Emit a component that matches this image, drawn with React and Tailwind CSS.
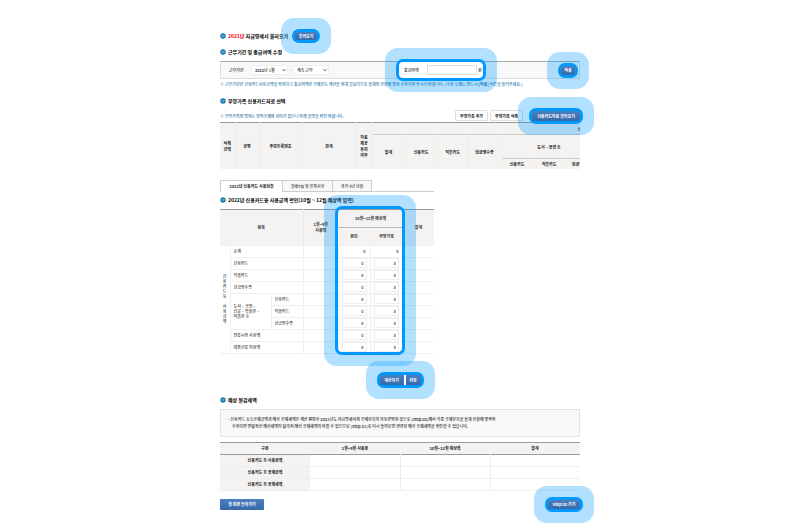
import React, { useState } from "react";
import clsx from "clsx";

const Bullet = () => (
  <svg viewBox="0 0 12 12" className="w-[6px] h-[6px] shrink-0">
    <circle cx="6" cy="6" r="5.5" fill="#1f7ab8" />
    <path
      d="M4 5l2 2.2L8 5"
      fill="none"
      stroke="#d5ebfa"
      strokeWidth="1.5"
      strokeLinecap="round"
    />
  </svg>
);

const Title = ({ children, className }) => (
  <h2
    className={clsx(
      "flex items-center gap-[2px] h-[8px] text-[5px] leading-[8px] font-bold text-black whitespace-nowrap",
      className
    )}
  >
    <Bullet />
    <span>{children}</span>
  </h2>
);

// Blue ring with a pale halo around the things the guide points at
const Highlight = ({ children, className }) => (
  <div
    className={clsx(
      "relative z-10 flex items-center rounded-[4px] shadow-[0_0_0_3px_#0099ff,0_0_0_14px_rgba(0,153,255,0.3)]",
      className
    )}
  >
    {children}
  </div>
);

const BlueButton = ({ children, className }) => (
  <button
    type="button"
    className={clsx(
      "bg-linear-to-b from-[#4a7fc0] to-[#3768a8] text-white font-bold text-[4px] leading-[6px] whitespace-nowrap text-center",
      className
    )}
  >
    {children}
  </button>
);

const WhiteButton = ({ children }) => (
  <button
    type="button"
    className="w-[33px] h-[11px] rounded-[1px] border border-[#dddddd] bg-white font-bold text-[4px] leading-[6px] text-[#222222] whitespace-nowrap"
  >
    {children}
  </button>
);

const Select = ({ label, options, className }) => (
  <div className={clsx("relative", className)}>
    <select
      aria-label={label}
      className="block w-full h-[10px] pl-[3px] appearance-none border border-[#eeeeee] bg-white text-[4px] leading-[8px] font-medium text-[#222222]"
    >
      {options.map((option) => (
        <option key={option}>{option}</option>
      ))}
    </select>
    <svg
      viewBox="0 0 10 10"
      className="absolute right-[2px] top-[3px] w-[4px] h-[4px] pointer-events-none"
    >
      <path d="M1 3l4 4 4-4" fill="none" stroke="#333333" strokeWidth="2" />
    </svg>
  </div>
);

const AmountInput = ({ label }) => {
  const [value, setValue] = useState("0");

  return (
    <input
      aria-label={label}
      value={value}
      onChange={(e) => setValue(e.target.value)}
      className="block mx-auto w-[25px] h-[10px] pr-[2px] border border-[#eeeeee] bg-white text-right text-[4px] leading-[8px] font-medium text-[#333333]"
    />
  );
};

const rows = [
  { label: "신용카드" },
  { label: "직불카드" },
  { label: "현금영수증" },
  { label: "신용카드", group: true, first: true },
  { label: "직불카드", group: true },
  { label: "현금영수증", group: true },
  { label: "전통시장 사용액" },
  { label: "대중교통 이용액" },
];

const tabs = [
  { label: "2022년 신용카드 사용현황", width: "w-[63px]" },
  { label: "절세Tip 및 유의사항", width: "w-[50px]" },
  { label: "과거 3년 현황", width: "w-[39px]" },
];

const FamilyTable = () => (
  <div className="mt-px overflow-hidden">
    <table className="w-[598px] table-fixed border-collapse border-t border-[#999999] bg-[#f4f3f2] text-center">
      <colgroup>
        <col className="w-[15px]" />
        <col className="w-[24px]" />
        <col className="w-[43px]" />
        <col className="w-[54px]" />
        <col className="w-[16px]" />
        <col className="w-[33px]" />
        <col className="w-[32px]" />
        <col className="w-[31px]" />
        <col className="w-[33px]" />
        <col className="w-[32px]" />
        <col className="w-[32px]" />
        <col className="w-[32px]" />
        <col />
      </colgroup>
      <thead className="[&_th]:border-r [&_th]:border-r-[#efeeee] [&_th]:p-0 [&_th]:font-bold">
        <tr className="h-[12px]">
          <th rowSpan={3}>
            삭제
            <br />
            선택
          </th>
          <th rowSpan={3}>성명</th>
          <th rowSpan={3}>주민등록번호</th>
          <th rowSpan={3}>관계</th>
          <th rowSpan={3}>
            자료
            <br />
            제공
            <br />
            동의
            <br />
            여부
          </th>
          <th colSpan={8}>신용카드등 사용금액</th>
        </tr>
        <tr className="h-[24px] [&>th]:border-t [&>th]:border-t-[#cccccc]">
          <th rowSpan={2}>합계</th>
          <th rowSpan={2}>신용카드</th>
          <th rowSpan={2}>직불카드</th>
          <th rowSpan={2}>현금영수증</th>
          <th colSpan={3}>도서 · 공연 등</th>
          <th rowSpan={2}></th>
        </tr>
        <tr className="h-[10px] [&>th]:border-t [&>th]:border-t-[#cccccc]">
          <th>신용카드</th>
          <th>직불카드</th>
          <th>현금영수증</th>
        </tr>
      </thead>
    </table>
  </div>
);

const UsageTable = () => (
  <div className="relative mt-[5px] w-[214px]">
    <table className="w-full table-fixed border-collapse border-t border-[#999999] text-[#333333]">
      <colgroup>
        <col className="w-[10px]" />
        <col className="w-[41px]" />
        <col className="w-[32px]" />
        <col className="w-[35px]" />
        <col className="w-[32px]" />
        <col className="w-[33px]" />
        <col className="w-[31px]" />
      </colgroup>
      <thead className="bg-[#f4f3f2] border-b border-[#999999] text-center [&_th]:p-0 [&_th]:font-bold">
        <tr className="h-[18px]">
          <th colSpan={3} rowSpan={2}>
            항목
          </th>
          <th rowSpan={2} className="border-l border-l-[#ebeaea]">
            1월~9월
            <br />
            사용액
          </th>
          <th colSpan={2} className="border-b border-b-[#bbbbbb]">
            10월~12월 예상액
          </th>
          <th rowSpan={2}>합계</th>
        </tr>
        <tr className="h-[18px]">
          <th>본인</th>
          <th>부양가족</th>
        </tr>
      </thead>
      <tbody className="[&_td]:border [&_td]:border-[#f0f0f0] [&_td]:p-0 [&_th]:border [&_th]:border-[#f0f0f0] [&_th]:p-0 [&_th]:pl-[3px] [&_th]:font-medium [&_th]:text-left [&_td:last-child]:border-r-0">
        <tr className="h-[12px]">
          <td rowSpan={9} className="border-l-0!">
            <div className="mx-auto w-[4px] break-all leading-[5px]">
              <span className="block">신용카드등</span>
              <span className="block mt-[5px]">사용금액</span>
            </div>
          </td>
          <th colSpan={2}>소계</th>
          <td></td>
          <td className="pr-[4px]! text-right">0</td>
          <td className="pr-[4px]! text-right">0</td>
          <td></td>
        </tr>
        {rows.map((row, i) => (
          <tr key={i} className="h-[12px]">
            {row.first && (
              <th rowSpan={3} className="leading-[5px]">
                도서 · 공연 ·<br />
                신문 · 박물관 ·<br />
                미술관 등
              </th>
            )}
            <th colSpan={row.group ? 1 : 2}>{row.label}</th>
            <td></td>
            <td>
              <AmountInput label={`${row.label} 본인`} />
            </td>
            <td>
              <AmountInput label={`${row.label} 부양가족`} />
            </td>
            <td></td>
          </tr>
        ))}
      </tbody>
    </table>
    <Highlight className="absolute! left-[118px] top-0 bottom-[2px] w-[64px] pointer-events-none" />
  </div>
);

const ResultTable = () => (
  <table className="mt-[5px] w-full table-fixed border-collapse border-t border-b border-t-[#999999] border-b-[#dddddd] text-[#222222]">
    <thead className="bg-[#f4f3f2]">
      <tr className="h-[12px] border-b border-[#999999] [&>th]:p-0 [&>th]:font-bold">
        <th>구분</th>
        <th>1월~9월 사용분</th>
        <th>10월~12월 예상액</th>
        <th>합계</th>
      </tr>
    </thead>
    <tbody>
      {["신용카드 등 사용금액", "신용카드 등 공제금액", "신용카드 등 공제세액"].map(
        (label) => (
          <tr key={label} className="h-[12px] border-b border-[#eeeeee]">
            <th className="bg-[#f4f3f2] p-0 font-bold">{label}</th>
            <td className="border-r border-r-[#eeeeee]"></td>
            <td className="border-r border-r-[#eeeeee]"></td>
            <td></td>
          </tr>
        )
      )}
    </tbody>
  </table>
);

const App = () => {
  const [active, setActive] = useState(0);

  return (
    <div className="min-h-screen bg-white overflow-hidden">
      <main className="mx-auto w-[45%] min-w-[360px] pt-[32px] pb-[14px] font-['Noto_Sans_CJK_KR',sans-serif] text-[4px] leading-[6px] font-medium text-[#222222]">
        {/* Load statement */}
        <div className="flex items-center gap-[7px]">
          <Title>
            <span className="text-[#e60012]">2021년</span> 지급명세서 불러오기
          </Title>
          <Highlight>
            <BlueButton className="w-[22px] h-[8px] rounded-[2px]">
              불러오기
            </BlueButton>
          </Highlight>
        </div>

        {/* Working period and salary */}
        <Title className="mt-[8px]">근무기간 및 총급여액 수정</Title>
        <div className="flex items-center h-[18px] mt-[5px] pl-[8px] pr-[4px] border border-[#dddddd] border-t-[#aaaaaa] bg-[#f8f8f8] whitespace-nowrap">
          <span className="w-[22px]">근무기간</span>
          <Select
            label="근무 시작월"
            options={["2022년 1월", "2022년 2월"]}
            className="w-[37px]"
          />
          <span className="w-[5px] text-center">~</span>
          <Select
            label="근무 종료월"
            options={["계속 근무", "12월"]}
            className="w-[36px]"
          />
          <Highlight className="ml-[70px] h-[16px] w-[84px] pl-[5px] bg-white">
            <label htmlFor="salary" className="w-[23px]">
              총급여액
            </label>
            <input
              id="salary"
              className="w-[50px] h-[10px] px-[2px] border border-[#dddddd] bg-white"
            />
            <span className="pl-[1px]">원</span>
          </Highlight>
          <Highlight className="ml-auto">
            <BlueButton className="w-[14px] h-[9px] rounded-[2px]">
              적용
            </BlueButton>
          </Highlight>
        </div>
        <p className="mt-[2px] text-[#1f72a8] whitespace-nowrap">
          ※ 근무기간란 신용카드사용금액을 확정하고 총급여액란 공제한도 계산을 위해
          필요하므로 올해의 상황에 맞게 수정하여 주시기 바랍니다. (수정 후에는
          반드시 <b>[적용]</b> 버튼을 눌러주세요.)
        </p>

        {/* Family members */}
        <Title className="mt-[10px]">부양가족 신용카드자료 선택</Title>
        <div className="flex items-center h-[11px] mt-[5px] whitespace-nowrap">
          <p className="mr-auto text-[#1f72a8]">
            ※ 부양가족의 범위는 인적공제와 차이가 있으니 아래 설명을 확인
            바랍니다.
          </p>
          <div className="flex gap-[2px]">
            <WhiteButton>부양가족 추가</WhiteButton>
            <WhiteButton>부양가족 삭제</WhiteButton>
          </div>
          <Highlight className="ml-[9px]">
            <BlueButton className="w-[48px] h-[10px] rounded-[2px]">
              신용카드자료 불러오기
            </BlueButton>
          </Highlight>
        </div>
        <FamilyTable />

        {/* Tabs */}
        <div className="flex w-[214px] h-[12px] mt-[11px]">
          {tabs.map((tab, i) => (
            <button
              key={tab.label}
              type="button"
              onClick={() => setActive(i)}
              className={clsx(
                "border-t border-r border-[#cccccc] whitespace-nowrap",
                tab.width,
                i === 0 && "border-l",
                i === active
                  ? "bg-white font-bold"
                  : "bg-[#f8f8f8] border-b text-[#333333]"
              )}
            >
              {tab.label}
            </button>
          ))}
          <div className="grow border-b border-[#cccccc]"></div>
        </div>

        <Title className="mt-[4px]">
          2022년 신용카드등 사용금액 확인(10월 ~ 12월 예상액 입력)
        </Title>
        <UsageTable />

        <div className="flex justify-center mt-[21px]">
          <Highlight className="gap-[2px] bg-white">
            <BlueButton className="w-[24px] h-[10px] rounded-l-[2px]">
              계산하기
            </BlueButton>
            <BlueButton className="w-[15px] h-[10px] rounded-r-[2px]">
              저장
            </BlueButton>
          </Highlight>
        </div>

        {/* Expected tax saving */}
        <Title className="mt-[11px]">예상 절감세액</Title>
        <div className="mt-[5px] py-[6px] pl-[7px] border border-[#e2e2e2] bg-[#f9f9f9] leading-[7px] whitespace-nowrap">
          <p>
            - 신용카드 소득공제금액과 예상 공제세액은 계산 편의상 2021년도
            지급명세서의 공제항목이 자동반영된 것으로 (Step.02)에서 각종
            공제항목을 올해 상황에 맞추어
          </p>
          <p className="pl-[4px]">
            수정하면 연말정산 예상세액이 달라져 예상 공제세액이 바뀔 수 있으므로
            (Step.01)로 다시 돌아오면 변경된 예상 공제세액을 확인할 수 있습니다.
          </p>
        </div>
        <ResultTable />

        <div className="flex items-center justify-between mt-[8px]">
          <BlueButton className="w-[44px] h-[11px] rounded-[1px]">
            첫 화면 돌아가기
          </BlueButton>
          <Highlight>
            <BlueButton className="w-[32px] h-[9px] rounded-[2px]">
              Step 02 가기
            </BlueButton>
          </Highlight>
        </div>
      </main>
    </div>
  );
};

export default App;
